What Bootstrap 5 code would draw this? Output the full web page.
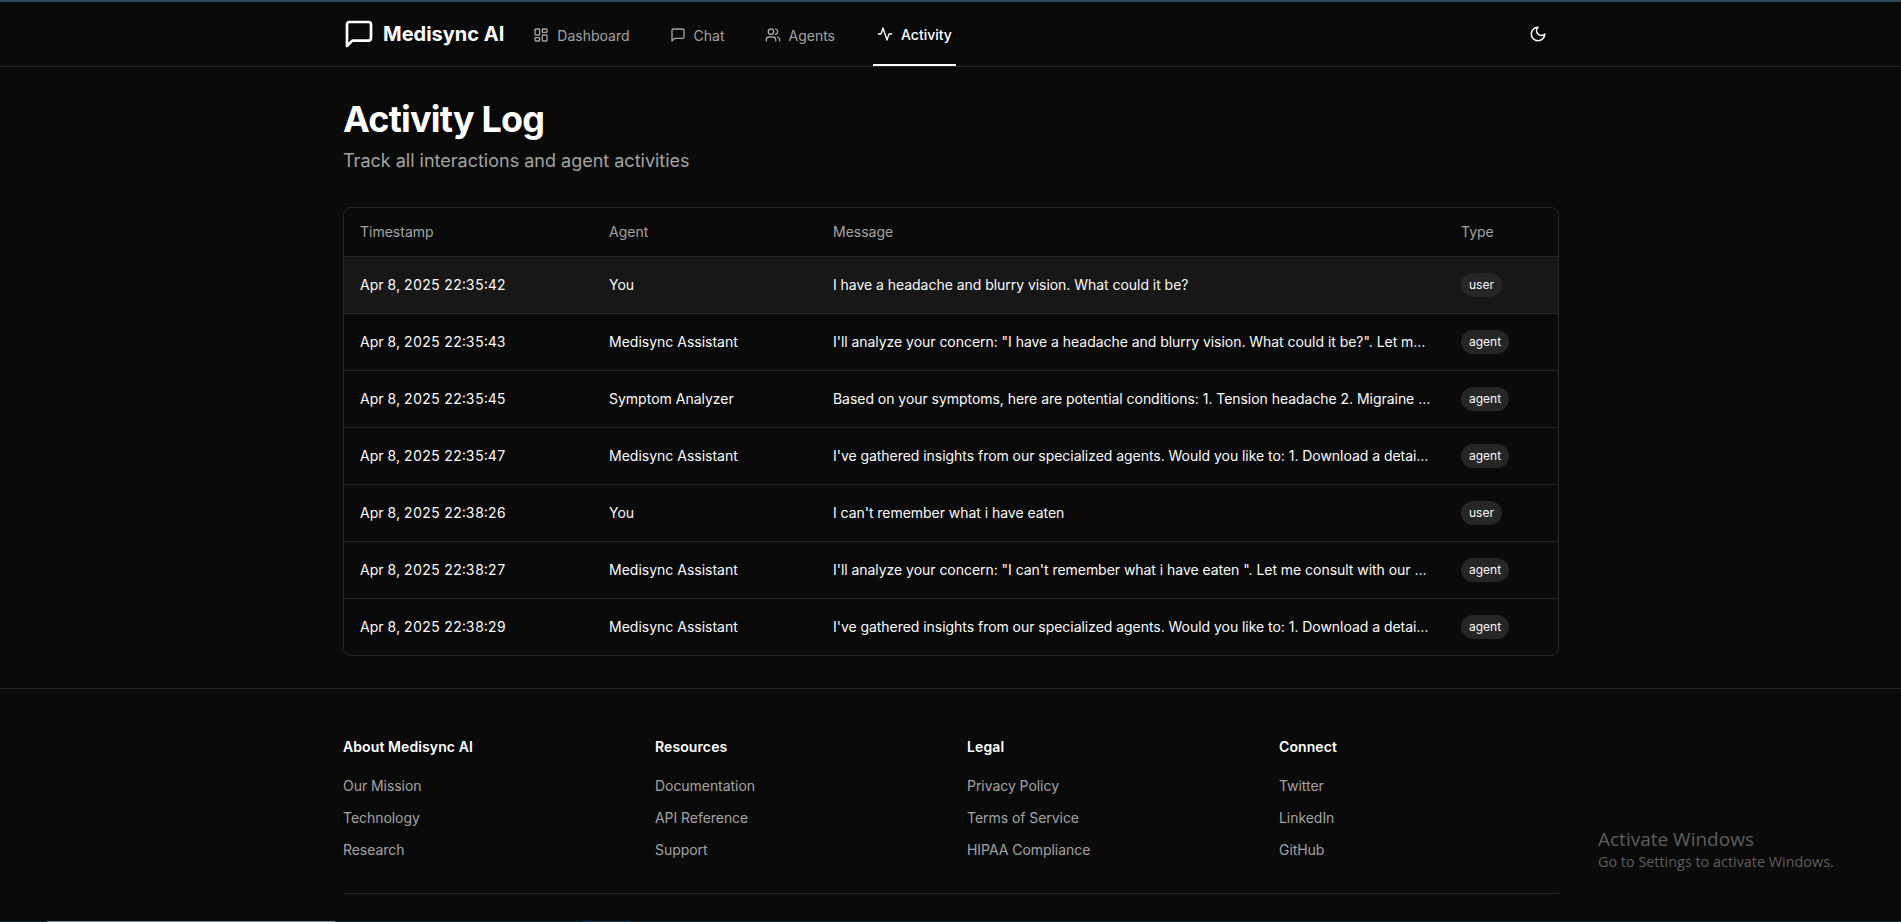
<!doctype html>
<html lang="en" data-bs-theme="dark">
<head>
<meta charset="utf-8">
<title>Medisync AI</title>
<link rel="stylesheet" href="https://cdn.jsdelivr.net/npm/bootstrap@5.3.0/dist/css/bootstrap.min.css">
<style>
html,body{height:922px;overflow:hidden}
body{background:#0a0a0a;color:#fafafa;font-family:Inter,"Liberation Sans",sans-serif;font-size:14px;position:relative}
.topline{height:2px;background:#2d4b5a}
.wrap{width:1216px;margin:0 0 0 343px}
.topbar{height:65px;border-bottom:1px solid #262626}
.brandbox{color:#fff;font-size:20px;font-weight:700;gap:8px;margin-right:25px;text-decoration:none}
.navitem{height:64px;padding:4px 4px 0;margin-right:32px;gap:8px;color:#a3a3a3;font-size:14px;font-weight:400;text-decoration:none;border-bottom:2px solid transparent}
.navitem.current{color:#fff;border-bottom-color:#fff;padding-bottom:2px;font-weight:500;margin-left:2px}
.navitem:hover{color:#fff}
.themebtn{color:#fff;width:32px;height:32px;margin-right:5px}
.headtitle{font-size:36px;font-weight:700;line-height:40px;margin:0;padding-top:32px;letter-spacing:-.8px;color:#fff}
.headsub{font-size:18px;line-height:28px;color:#a3a3a3;margin:8px 0 0}
.logbox{margin-top:32px;border:1px solid #262626;border-radius:8px;overflow:hidden}
.logtable{table-layout:fixed;width:100%;margin:0;--bs-table-bg:transparent;--bs-table-color:#fafafa;--bs-table-border-color:#262626;border-color:#262626}
.logtable th{height:48px;padding:0 16px;font-size:14px;font-weight:400;color:#a3a3a3;vertical-align:middle}
.logtable td{height:57px;padding:0 16px;font-size:14px;vertical-align:middle}
.logtable tbody tr:last-child td{border-bottom:0}
.logtable td.msgcell{white-space:nowrap;overflow:hidden;text-overflow:ellipsis;padding-right:14px;letter-spacing:-.04px}
.logtable td.stampcell{font-variant-numeric:tabular-nums}
.logtable tr.rowlit td{--bs-table-bg:#171717;background:#171717}
.c1{width:249px}.c2{width:224px}.c3{width:628px}
.kindpill{display:inline-block;background:#262626;color:#fafafa;font-size:12px;line-height:16px;padding:4px 8px;border-radius:999px}
.foot{margin-top:32px;border-top:1px solid #262626;padding-top:48px}
.footrow{--bs-gutter-x:32px}
.foothead{font-size:14px;line-height:20px;font-weight:600;color:#fff;margin:0 0 16px;letter-spacing:.1px}
.footlist{list-style:none;margin:0;padding:0}
.footlist li{height:32px;line-height:20px;padding-top:3px}
.footlist a{color:#a3a3a3;text-decoration:none;font-size:14px;letter-spacing:-.05px}
.footrule{border-top:1px solid #262626;margin-top:24px}
.winmark{position:absolute;left:1598px;top:827px;color:#5f5f5f;font-family:"Open Sans","Liberation Sans",sans-serif;font-size:14.4px;line-height:18px}
.winmark b{display:block;font-weight:400;font-size:19px;line-height:24px;margin-bottom:2px}
.strip0,.strip1,.strip2{position:absolute;bottom:0;height:1px}
.strip0{left:0;right:0;background:#0e2a33}
.strip1{left:47px;width:288px;background:#7d8a94}
.strip2{left:582px;width:47px;background:#0f3f63}
</style>
</head>
<body>
<div class="topline"></div>
<header class="topbar">
  <div class="wrap d-flex align-items-center justify-content-between">
    <nav class="d-flex align-items-center">
      <a href="#" class="brandbox d-flex align-items-center">
        <svg width="32" height="32" viewBox="0 0 24 24" fill="none" stroke="currentColor" stroke-width="2" stroke-linecap="round" stroke-linejoin="round"><path d="M21 15a2 2 0 0 1-2 2H7l-4 4V5a2 2 0 0 1 2-2h14a2 2 0 0 1 2 2z"/></svg>
        <span>Medisync AI</span>
      </a>
      <a href="#" class="navitem d-flex align-items-center">
        <svg width="16" height="16" viewBox="0 0 24 24" fill="none" stroke="currentColor" stroke-width="2" stroke-linecap="round" stroke-linejoin="round"><rect x="3" y="3" width="7" height="9" rx="1"/><rect x="14" y="3" width="7" height="5" rx="1"/><rect x="14" y="12" width="7" height="9" rx="1"/><rect x="3" y="16" width="7" height="5" rx="1"/></svg>
        <span>Dashboard</span>
      </a>
      <a href="#" class="navitem d-flex align-items-center">
        <svg width="16" height="16" viewBox="0 0 24 24" fill="none" stroke="currentColor" stroke-width="2" stroke-linecap="round" stroke-linejoin="round"><path d="M21 15a2 2 0 0 1-2 2H7l-4 4V5a2 2 0 0 1 2-2h14a2 2 0 0 1 2 2z"/></svg>
        <span>Chat</span>
      </a>
      <a href="#" class="navitem d-flex align-items-center">
        <svg width="16" height="16" viewBox="0 0 24 24" fill="none" stroke="currentColor" stroke-width="2" stroke-linecap="round" stroke-linejoin="round"><path d="M16 21v-2a4 4 0 0 0-4-4H6a4 4 0 0 0-4 4v2"/><circle cx="9" cy="7" r="4"/><path d="M22 21v-2a4 4 0 0 0-3-3.87"/><path d="M16 3.13a4 4 0 0 1 0 7.75"/></svg>
        <span>Agents</span>
      </a>
      <a href="#" class="navitem current d-flex align-items-center">
        <svg width="16" height="16" viewBox="0 0 24 24" fill="none" stroke="currentColor" stroke-width="2" stroke-linecap="round" stroke-linejoin="round"><polyline points="22 12 18 12 15 21 9 3 6 12 2 12"/></svg>
        <span>Activity</span>
      </a>
    </nav>
    <button type="button" class="btn p-0 border-0 themebtn d-flex align-items-center justify-content-center" aria-label="Toggle theme">
      <svg width="18" height="18" viewBox="0 0 24 24" fill="none" stroke="currentColor" stroke-width="2" stroke-linecap="round" stroke-linejoin="round"><path d="M12 3a6 6 0 0 0 9 9 9 9 0 1 1-9-9Z"/></svg>
    </button>
  </div>
</header>
<main class="wrap">
  <h1 class="headtitle">Activity Log</h1>
  <p class="headsub">Track all interactions and agent activities</p>
  <div class="logbox">
    <table class="table logtable">
      <colgroup><col class="c1"><col class="c2"><col class="c3"><col></colgroup>
      <thead><tr><th>Timestamp</th><th>Agent</th><th>Message</th><th>Type</th></tr></thead>
      <tbody>
        <tr class="rowlit"><td class="stampcell">Apr 8, 2025 22:35:42</td><td>You</td><td class="msgcell">I have a headache and blurry vision. What could it be?</td><td><span class="kindpill">user</span></td></tr>
        <tr><td class="stampcell">Apr 8, 2025 22:35:43</td><td>Medisync Assistant</td><td class="msgcell">I'll analyze your concern: "I have a headache and blurry vision. What could it be?". Let me consult with our specialized agents.</td><td><span class="kindpill">agent</span></td></tr>
        <tr><td class="stampcell">Apr 8, 2025 22:35:45</td><td>Symptom Analyzer</td><td class="msgcell">Based on your symptoms, here are potential conditions: 1. Tension headache 2. Migraine 3. Eye strain</td><td><span class="kindpill">agent</span></td></tr>
        <tr><td class="stampcell">Apr 8, 2025 22:35:47</td><td>Medisync Assistant</td><td class="msgcell">I've gathered insights from our specialized agents. Would you like to: 1. Download a detailed report</td><td><span class="kindpill">agent</span></td></tr>
        <tr><td class="stampcell">Apr 8, 2025 22:38:26</td><td>You</td><td class="msgcell">I can't remember what i have eaten</td><td><span class="kindpill">user</span></td></tr>
        <tr><td class="stampcell">Apr 8, 2025 22:38:27</td><td>Medisync Assistant</td><td class="msgcell">I'll analyze your concern: "I can't remember what i have eaten ". Let me consult with our specialized agents.</td><td><span class="kindpill">agent</span></td></tr>
        <tr><td class="stampcell">Apr 8, 2025 22:38:29</td><td>Medisync Assistant</td><td class="msgcell">I've gathered insights from our specialized agents. Would you like to: 1. Download a detailed report</td><td><span class="kindpill">agent</span></td></tr>
      </tbody>
    </table>
  </div>
</main>
<footer class="foot">
  <div class="wrap">
    <div class="row footrow">
      <div class="col-3"><h2 class="foothead">About Medisync AI</h2><ul class="footlist"><li><a href="#">Our Mission</a></li><li><a href="#">Technology</a></li><li><a href="#">Research</a></li></ul></div>
      <div class="col-3"><h2 class="foothead">Resources</h2><ul class="footlist"><li><a href="#">Documentation</a></li><li><a href="#">API Reference</a></li><li><a href="#">Support</a></li></ul></div>
      <div class="col-3"><h2 class="foothead">Legal</h2><ul class="footlist"><li><a href="#">Privacy Policy</a></li><li><a href="#">Terms of Service</a></li><li><a href="#">HIPAA Compliance</a></li></ul></div>
      <div class="col-3"><h2 class="foothead">Connect</h2><ul class="footlist"><li><a href="#">Twitter</a></li><li><a href="#">LinkedIn</a></li><li><a href="#">GitHub</a></li></ul></div>
    </div>
    <div class="footrule"></div>
  </div>
</footer>
<div class="winmark"><b>Activate Windows</b>Go to Settings to activate Windows.</div>
<div class="strip0"></div>
<div class="strip1"></div>
<div class="strip2"></div>
<script src="https://cdn.jsdelivr.net/npm/bootstrap@5.3.0/dist/js/bootstrap.bundle.min.js"></script>
</body>
</html>
